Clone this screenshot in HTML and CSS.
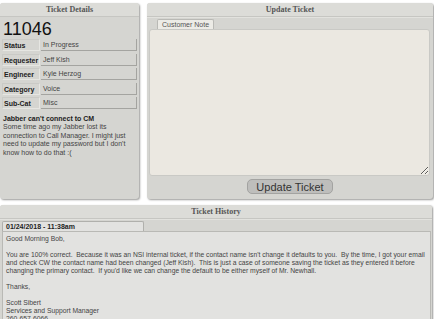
FILE: index.html
```html
<!DOCTYPE html>
<html>
<head>
  <link rel="stylesheet" href="styles.css">
</head>
<body>
  <div class="top">
    <div class="panel details">
      <div class="panel-head">Ticket Details</div>
      <div class="ticket-no">11046</div>
      <div class="field"><span class="label">Status</span><span class="value">In Progress</span></div>
      <div class="field"><span class="label">Requester</span><span class="value">Jeff Kish</span></div>
      <div class="field"><span class="label">Engineer</span><span class="value">Kyle Herzog</span></div>
      <div class="field"><span class="label">Category</span><span class="value">Voice</span></div>
      <div class="field"><span class="label">Sub-Cat</span><span class="value">Misc</span></div>
      <div class="summary">
        <b>Jabber can't connect to CM</b><br>
        Some time ago my Jabber lost its connection to Call Manager. I might just need to update my password but I don't know how to do that :(
      </div>
    </div>
    <div class="panel update">
      <div class="panel-head">Update Ticket</div>
      <div class="tabs">
        <span class="tab">Customer Note</span>
      </div>
      <textarea class="note"></textarea>
      <div class="actions">
        <button class="btn">Update Ticket</button>
      </div>
    </div>
  </div>
  <div class="panel history">
    <div class="panel-head">Ticket History</div>
    <div class="tabs">
      <span class="tab date">01/24/2018 - 11:38am</span>
    </div>
    <div class="entry">
      Good Morning Bob,<br>
      <br>
      You are 100% correct.&nbsp; Because it was an NSI internal ticket, if the contact name isn't change it defaults to you.&nbsp; By the time, I got your email and check CW the contact name had been changed (Jeff Kish).&nbsp; This is just a case of someone saving the ticket as they entered it before changing the primary contact.&nbsp; If you'd like we can change the default to be either myself of Mr. Newhall.<br>
      <br>
      Thanks,<br>
      <br>
      Scott Sibert<br>
      Services and Support Manager<br>
      260-657-6066
    </div>
  </div>
</body>
</html>
```

FILE: styles.css
```css
body {
  margin: 0;
  background-color: #fff;
  font-family: "Liberation Sans", Arial, sans-serif;
  color: #333;
  font-size: 7px;
}

.top {
  display: flex;
  gap: 8px;
  padding-top: 3px;
  height: 196px;
}

.panel {
  background-color: #d5d5d1;
  border-radius: 3px;
  box-shadow: 1px 1px 2px #9a9a98;
}

.panel-head {
  height: 13px;
  line-height: 13px;
  text-align: center;
  background-color: #dcdcd8;
  border-bottom: 1px solid #c6c6c2;
  border-radius: 3px 3px 0 0;
  font-family: "Liberation Serif", "Times New Roman", serif;
  font-weight: bold;
  font-size: 8px;
  color: #555;
}

.details {
  width: 139px;
  box-sizing: border-box;
}

.ticket-no {
  font-size: 18px;
  padding: 2px 0 0 3px;
  height: 20px;
  color: #111;
}

.field {
  display: flex;
  height: 12px;
  margin: 0 2px 2.6px 2px;
}

.label {
  width: 35px;
  line-height: 11px;
  padding-left: 1px;
  font-weight: bold;
  font-size: 7px;
  color: #222;
  border: 1px solid #cacac6;
  border-right-color: #e6e6e2;
  border-bottom-color: #e6e6e2;
}

.value {
  flex: 1;
  line-height: 12px;
  padding-left: 2px;
  margin-left: 1px;
  border-bottom: 1px solid #a4a4a0;
  border-right: 1px solid #a4a4a0;
  color: #444;
}

.summary {
  padding: 3px 3px 0 3px;
  line-height: 8.5px;
  font-size: 7px;
  color: #444;
}

.summary b {
  color: #222;
}

.update {
  flex: 1;
  margin-right: 1px;
  display: flex;
  flex-direction: column;
}

.tabs {
  display: flex;
  height: 11px;
  padding-left: 10px;
  border-top: 1px solid #e2e2de;
}

.tab {
  background-color: #ecebe6;
  border: 1px solid #b9b9b5;
  border-bottom: none;
  border-radius: 2px 2px 0 0;
  padding: 0 4px;
  line-height: 10px;
  font-size: 7px;
  color: #555;
  margin-top: 1px;
}

.note {
  height: 145px;
  margin: 0 3px 0 2px;
  background-color: #ebe8e1;
  border: 1px solid #c9c9c5;
  border-radius: 3px;
  padding: 0;
  resize: vertical;
}

.actions {
  display: flex;
  justify-content: center;
  padding-top: 3px;
}

.btn {
  width: 86px;
  height: 15px;
  padding: 0;
  background-color: #bebebc;
  border: 1px solid #a3a3a1;
  border-radius: 5px;
  font-family: "Liberation Sans", Arial, sans-serif;
  font-size: 11px;
  color: #333;
}

.history {
  margin-top: 6px;
  margin-right: 2px;
  padding-bottom: 10px;
}

.history .tabs {
  padding-left: 2px;
}

.history .tab.date {
  width: 133px;
  background-color: #e2e2e0;
  font-weight: bold;
  color: #222;
  border-color: #b0b0ac;
  padding-left: 3px;
}

.entry {
  margin: 0 1px 0 2px;
  background-color: #e2e2e0;
  border: 1px solid #b9b9b5;
  padding: 3px 1px 4px 3px;
  line-height: 8px;
  font-size: 6.75px;
  color: #444;
}
```
